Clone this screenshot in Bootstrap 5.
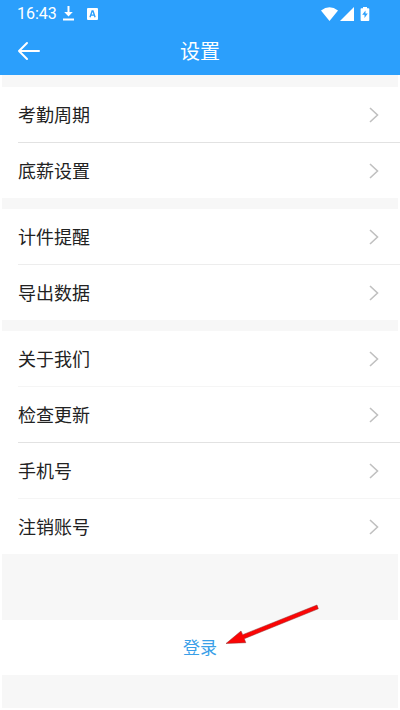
<!DOCTYPE html>
<html lang="zh-CN">
<head>
<meta charset="utf-8">
<meta name="viewport" content="width=device-width, initial-scale=1">
<title>设置</title>
<link href="https://cdn.jsdelivr.net/npm/bootstrap@5.3.0/dist/css/bootstrap.min.css" rel="stylesheet">
<style>
  body { font-family: Roboto, "Noto Sans CJK SC", sans-serif; background: #fff; color: #222; }
  .app-head { background: #2b9ffc; color: #fff; }
  .status-bar { height: 27px; padding: 0 30px 0 17px; font-size: 16px; line-height: 27px; }
  .status-left { gap: 13px; }
  .status-time { margin-right: -7px; }
  .status-right { gap: 2px; }
  .title-bar { height: 48px; padding: 0 17px; }
  .title-bar h1 { font-size: 20px; line-height: 48px; font-weight: 400; padding-top: 2px; }
  .back-btn { width: 24px; color: #fff; }
  .settings-page { background: #f7f7f7; margin: 0 2px; padding: 12px 0 33px; }
  .settings-group { background: #fff; margin: 0 -2px 11px; }
  .setting-row { height: 55px; padding: 0 21px 0 0; color: #222; font-size: 18px; line-height: 55px; }
  .setting-row span { padding-top: 1px; }
  .settings-group li { padding-left: 18px; }
  .settings-group li + li .setting-row { height: 56px; border-top: 1px solid #f5f5f5; }
  .settings-group li + li.line-mid .setting-row { border-color: #ededed; }
  .settings-group li + li.line-strong .setting-row { border-color: #e2e2e2; }
  .chevron { stroke: #c0c0c0; }
  .login-area { margin: 66px -2px 0; background: #fff; }
  .login-btn { height: 55px; padding: 2px 0 0; font-size: 17px; color: #3a9fe8; border-radius: 0; }
  .pointer-arrow { left: calc(50% + 24px); top: -16px; pointer-events: none; }
</style>
<script src="https://cdn.jsdelivr.net/npm/bootstrap@5.3.0/dist/js/bootstrap.bundle.min.js"></script>
</head>
<body>
<header class="app-head">
  <div class="status-bar d-flex align-items-center justify-content-between">
    <div class="status-left d-flex align-items-center">
      <span class="status-time">16:43</span>
      <svg width="11" height="15" viewBox="0 0 11 15" fill="#fff" aria-hidden="true"><path d="M4.5 0h2v6h3.3L5.5 10.6 1.2 6h3.3zM0 12.6h11v1.8H0z"/></svg>
      <svg width="11" height="12" viewBox="0 0 11 12" aria-hidden="true"><rect width="11" height="12" rx="1" fill="#fff"/><path d="M3 9.2 5.1 3h.9l2.1 6.2M3.9 7.1h3.4" fill="none" stroke="#2b9ffc" stroke-width="1.4"/></svg>
    </div>
    <div class="status-right d-flex align-items-center">
      <svg width="17" height="14" viewBox="0 0 17 14" fill="#fff" aria-hidden="true"><path d="M0 3.4Q8.5-3 17 3.4L8.5 14z"/></svg>
      <svg width="14" height="14" viewBox="0 0 14 14" fill="#fff" aria-hidden="true"><path d="M14 0v14H0z"/></svg>
      <svg class="ms-1" width="10" height="14" viewBox="0 0 10 14" aria-hidden="true"><path d="M3 0h4v1.3h1.500q.8 0 .8.800v11q0 .9-.9.900H1.500q-.9 0-.9-.900v-11q0-.8.800-.800H3z" fill="#fff"/><path d="M5.500 3.500v3h2.300L4.500 11V7.800H2.200z" fill="#2b9ffc"/></svg>
    </div>
  </div>
  <div class="title-bar d-flex align-items-center">
    <button type="button" class="back-btn btn p-0 border-0 d-flex" aria-label="返回">
      <svg width="24" height="20" viewBox="0 0 24 20" fill="none" stroke="#fff" stroke-width="2" stroke-linecap="round" stroke-linejoin="round"><path d="M22 10H2M10 2 2 10l8 8"/></svg>
    </button>
    <h1 class="flex-grow-1 text-center mb-0">设置</h1>
    <span class="back-btn"></span>
  </div>
</header>

<main class="settings-page">
  <ul class="settings-group list-unstyled">
    <li><a href="#" class="setting-row d-flex align-items-center justify-content-between text-decoration-none"><span>考勤周期</span><svg class="chevron" width="10" height="16" viewBox="0 0 10 16" fill="none" stroke-width="1.600"><path d="M1 1l7.500 7L1 15"/></svg></a></li>
    <li class="line-strong"><a href="#" class="setting-row d-flex align-items-center justify-content-between text-decoration-none"><span>底薪设置</span><svg class="chevron" width="10" height="16" viewBox="0 0 10 16" fill="none" stroke-width="1.600"><path d="M1 1l7.500 7L1 15"/></svg></a></li>
  </ul>
  <ul class="settings-group list-unstyled">
    <li><a href="#" class="setting-row d-flex align-items-center justify-content-between text-decoration-none"><span>计件提醒</span><svg class="chevron" width="10" height="16" viewBox="0 0 10 16" fill="none" stroke-width="1.600"><path d="M1 1l7.500 7L1 15"/></svg></a></li>
    <li class="line-mid"><a href="#" class="setting-row d-flex align-items-center justify-content-between text-decoration-none"><span>导出数据</span><svg class="chevron" width="10" height="16" viewBox="0 0 10 16" fill="none" stroke-width="1.600"><path d="M1 1l7.500 7L1 15"/></svg></a></li>
  </ul>
  <ul class="settings-group list-unstyled mb-0">
    <li><a href="#" class="setting-row d-flex align-items-center justify-content-between text-decoration-none"><span>关于我们</span><svg class="chevron" width="10" height="16" viewBox="0 0 10 16" fill="none" stroke-width="1.600"><path d="M1 1l7.500 7L1 15"/></svg></a></li>
    <li><a href="#" class="setting-row d-flex align-items-center justify-content-between text-decoration-none"><span>检查更新</span><svg class="chevron" width="10" height="16" viewBox="0 0 10 16" fill="none" stroke-width="1.600"><path d="M1 1l7.500 7L1 15"/></svg></a></li>
    <li class="line-strong"><a href="#" class="setting-row d-flex align-items-center justify-content-between text-decoration-none"><span>手机号</span><svg class="chevron" width="10" height="16" viewBox="0 0 10 16" fill="none" stroke-width="1.600"><path d="M1 1l7.500 7L1 15"/></svg></a></li>
    <li><a href="#" class="setting-row d-flex align-items-center justify-content-between text-decoration-none"><span>注销账号</span><svg class="chevron" width="10" height="16" viewBox="0 0 10 16" fill="none" stroke-width="1.600"><path d="M1 1l7.500 7L1 15"/></svg></a></li>
  </ul>
  <div class="login-area position-relative">
    <button type="button" class="login-btn btn w-100 border-0">登录</button>
    <svg class="pointer-arrow position-absolute" width="96" height="42" viewBox="0 0 96 42" aria-hidden="true"><path d="M2 39.500 17 27l1.700 3.700L93 1l1.300 3.800L20.300 34.700l1.500 4z" fill="#fb0505" stroke="#8d3030" stroke-width=".5"/></svg>
  </div>
</main>
</body>
</html>
